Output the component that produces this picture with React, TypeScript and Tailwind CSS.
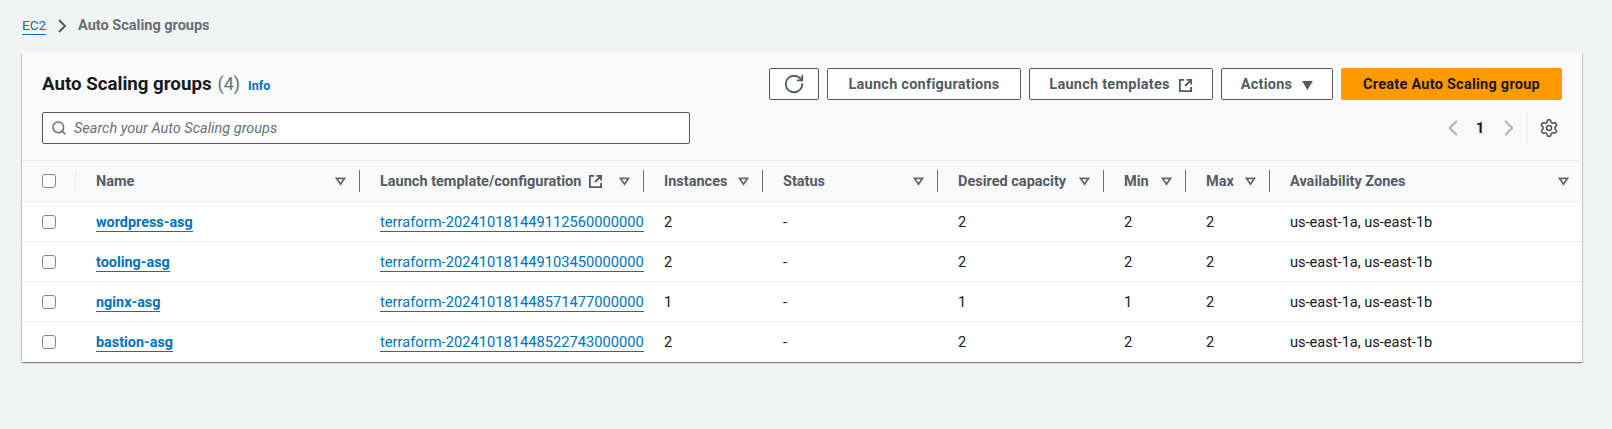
import { ChevronLeft, ChevronRight, RotateCw, Search, Settings } from "lucide-react"

const columns = "grid grid-cols-[54px_284px_284px_119px_175px_166px_82px_84px_1fr]"

const headers = [
  { label: "Name", external: false },
  { label: "Launch template/configuration", external: true },
  { label: "Instances", external: false },
  { label: "Status", external: false },
  { label: "Desired capacity", external: false },
  { label: "Min", external: false },
  { label: "Max", external: false },
  { label: "Availability Zones", external: false },
]

const groups = [
  { name: "wordpress-asg", template: "terraform-202410181449112560000000", instances: 2, desired: 2, min: 2 },
  { name: "tooling-asg", template: "terraform-202410181449103450000000", instances: 2, desired: 2, min: 2 },
  { name: "nginx-asg", template: "terraform-202410181448571477000000", instances: 1, desired: 1, min: 1 },
  { name: "bastion-asg", template: "terraform-202410181448522743000000", instances: 2, desired: 2, min: 2 },
]

function ExternalIcon({ className }: { className?: string }) {
  return (
    <svg viewBox="0 0 16 16" fill="none" stroke="currentColor" strokeWidth="2" className={className}>
      <path d="M6.5 2H2v12h12V9.5" />
      <path d="M9 2h5v5" />
      <path d="M14 2 7.5 8.5" />
    </svg>
  )
}

function SortIcon() {
  return (
    <svg viewBox="0 0 12 10" fill="none" stroke="#5f6b7a" strokeWidth="2" strokeLinejoin="miter" className="h-[9px] w-[11px] shrink-0">
      <path d="M1.5 1.5h9L6 8z" />
    </svg>
  )
}

function Checkbox() {
  return <div className="h-[14px] w-[14px] rounded-[3px] border border-[#7d8998] bg-white" />
}

function Button({ children, className }: { children: React.ReactNode; className: string }) {
  return (
    <button className={`flex h-[32px] items-center justify-center rounded-[2px] border border-[#545b64] bg-white text-[14.5px] font-bold tracking-[0.25px] text-[#545b64] ${className}`}>
      {children}
    </button>
  )
}

export default function App() {
  return (
    <div className="h-[429px] bg-[#f2f3f3] pl-[22px] pr-[30px] pt-[16px] font-['Roboto',sans-serif] text-[14.6px] text-[#16191f]">
      <nav className="flex h-[20px] items-center text-[14.5px]">
        <a className="border-b border-[#0073bb] text-[13.5px] leading-[17px] text-[#0073bb]">EC2</a>
        <svg viewBox="0 0 10 14" fill="none" stroke="#545b64" strokeWidth="2" className="ml-[11px] mr-[11px] h-[14px] w-[10px]">
          <path d="M2 1l6 6-6 6" />
        </svg>
        <span className="font-bold text-[#687078]">Auto Scaling groups</span>
      </nav>

      <section className="mt-[17px] bg-white shadow-[0_1px_1px_0_rgba(0,28,36,0.3),1px_1px_1px_0_rgba(0,28,36,0.15),-1px_1px_1px_0_rgba(0,28,36,0.15)]">
        <header className="bg-[#fafafa] px-5 pb-4 pt-[15px]">
          <div className="flex items-center justify-between">
            <div className="flex items-baseline">
              <h1 className="text-[18.7px] font-bold text-[#16191f]">Auto Scaling groups</h1>
              <span className="ml-[6px] text-[18px] text-[#687078]">(4)</span>
              <a className="ml-[8px] text-[12.5px] font-bold text-[#0073bb]">Info</a>
            </div>
            <div className="flex gap-2">
              <Button className="w-[50px]">
                <RotateCw className="h-[22px] w-[22px]" strokeWidth={2} />
              </Button>
              <Button className="w-[194px] pt-[2px]">Launch configurations</Button>
              <Button className="w-[184px] gap-2 pt-[2px]">
                Launch templates
                <ExternalIcon className="h-[15px] w-[15px]" />
              </Button>
              <Button className="w-[112px] gap-[10px] pt-[2px]">
                Actions
                <svg viewBox="0 0 12 10" className="h-[9px] w-[11px]" fill="currentColor">
                  <path d="M0 0h12L6 10z" />
                </svg>
              </Button>
              <button className="h-[32px] w-[221px] rounded-[2px] bg-[#ff9900] pt-[2px] text-[14.5px] font-bold tracking-[0.25px] text-[#16191f]">
                Create Auto Scaling group
              </button>
            </div>
          </div>
          <div className="mt-3 flex items-center justify-between">
            <div className="flex h-[32px] w-[648px] items-center gap-[7px] rounded-[2px] border border-[#545b64] bg-white pl-2">
              <Search className="h-[16px] w-[16px] text-[#687078]" strokeWidth={2.25} />
              <span className="pt-[2px] text-[14.5px] italic text-[#687078]">Search your Auto Scaling groups</span>
            </div>
            <div className="flex items-center">
              <ChevronLeft className="h-[26px] w-[26px] text-[#aab7b8]" strokeWidth={2} />
              <span className="ml-[9px] w-[10px] text-center text-[15px] font-bold">1</span>
              <ChevronRight className="ml-[11px] h-[26px] w-[26px] text-[#aab7b8]" strokeWidth={2} />
              <div className="ml-[5px] h-[32px] border-l border-[#eaeded]" />
              <Settings className="ml-[11px] mr-[3px] h-[20px] w-[20px] text-[#545b64]" strokeWidth={2} />
            </div>
          </div>
        </header>

        <div className={`${columns} h-[42px] items-center border-y border-[#eaeded] bg-[#fafafa]`}>
          <div className="flex items-center justify-between">
            <div className="ml-5">
              <Checkbox />
            </div>
            <div className="h-[22px] border-r border-[#eaeded]" />
          </div>
          {headers.map((h, i) => (
            <div key={h.label} className="flex items-center justify-between">
              <div className="flex min-w-0 flex-1 items-center justify-between pl-[20px] pr-[13px]">
                <div className="flex items-center gap-[7px] text-[14.5px] font-bold text-[#545b64]">
                  <span className="whitespace-nowrap pt-[2px]">{h.label}</span>
                  {h.external && <ExternalIcon className="h-[15px] w-[15px]" />}
                </div>
                <SortIcon />
              </div>
              {i < headers.length - 1 && <div className="h-[22px] border-r border-[#687078]" />}
            </div>
          ))}
        </div>

        {groups.map((g, i) => (
          <div
            key={g.name}
            className={`${columns} h-[40px] items-center ${i < groups.length - 1 ? "border-b border-[#eaeded]" : ""}`}
          >
            <div className="pl-5">
              <Checkbox />
            </div>
            <div className="pl-[20px] pt-[2px]">
              <a className="border-b border-[#0073bb] text-[14.4px] font-bold leading-[17px] text-[#0073bb]">{g.name}</a>
            </div>
            <div className="whitespace-nowrap pl-[20px] pt-[2px]">
              <a className="border-b border-[#0073bb] text-[14.7px] leading-[17px] text-[#0073bb]">{g.template}</a>
            </div>
            <div className="pl-[20px] pt-[2px]">{g.instances}</div>
            <div className="pl-[20px] pt-[2px]">-</div>
            <div className="pl-[20px] pt-[2px]">{g.desired}</div>
            <div className="pl-[20px] pt-[2px]">{g.min}</div>
            <div className="pl-[20px] pt-[2px]">2</div>
            <div className="pl-[20px] pt-[2px]">us-east-1a, us-east-1b</div>
          </div>
        ))}
      </section>
    </div>
  )
}
